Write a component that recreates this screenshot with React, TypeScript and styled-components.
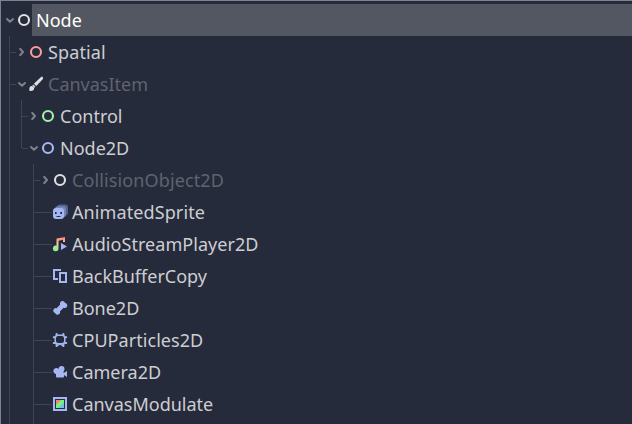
import React from "react";
import styled, { createGlobalStyle, css } from "styled-components";

const BG = "#262b3b";
const LINE = "#3f4453";
const BLUE = "#a5b7f3";

const GlobalStyle = createGlobalStyle`
  html, body { margin: 0; padding: 0; background: ${BG}; }
`;

type GuideKind = "blank" | "pipe" | "tee" | "elbow" | "dash";
type ArrowKind = "open" | "closed";

const Panel = styled.div`
  box-sizing: border-box;
  width: 632px;
  height: 424px;
  overflow: hidden;
  padding: 3px 0 0 3px;
  border-top: 1px solid #7c828e;
  border-left: 1px solid #7c828e;
  background: ${BG};
  font-family: "Noto Sans", sans-serif;
`;

const Row = styled.div`
  display: flex;
  align-items: center;
  height: 32px;
`;

const Guide = styled.span<{ $kind: GuideKind }>`
  flex: none;
  width: 12px;
  height: 32px;
  background-repeat: no-repeat;
  ${({ $kind }) => {
    const v = `linear-gradient(${LINE}, ${LINE})`;
    switch ($kind) {
      case "pipe":
        return css`background-image: ${v}; background-size: 1px 32px; background-position: 5px 0;`;
      case "tee":
        return css`background-image: ${v}, ${v}; background-size: 1px 32px, 7px 1px; background-position: 5px 0, 5px 16px;`;
      case "elbow":
        return css`background-image: ${v}, ${v}; background-size: 1px 16px, 6px 1px; background-position: 5px 0, 6px 16px;`;
      case "dash":
        return css`background-image: ${v}; background-size: 12px 1px; background-position: 0 16px;`;
      default:
        return "";
    }
  }}
`;

const ArrowSvg = styled.svg`
  flex: none;
  width: 12px;
  height: 12px;
`;

const IconSvg = styled.svg`
  flex: none;
  width: 16px;
  height: 16px;
`;

const Label = styled.span<{ $selected?: boolean; $dim?: boolean; $tracking?: number }>`
  flex: 1;
  height: 32px;
  padding-left: 4px;
  line-height: 32px;
  font-size: 18px;
  letter-spacing: ${({ $tracking }) => $tracking ?? 0}px;
  white-space: nowrap;
  color: ${({ $selected, $dim }) => ($selected ? "#ffffff" : $dim ? "#5f636f" : "#cdced2")};
  background: ${({ $selected }) => ($selected ? "#535762" : "transparent")};
`;

const Arrow = ({ kind }: { kind: ArrowKind }) => (
  <ArrowSvg viewBox="0 0 12 12" fill="none" stroke="#7f838d" strokeWidth="2">
    {kind === "open" ? (
      <path d="M3 5 L6 7.800 L9 5" strokeLinecap="round" strokeLinejoin="round" />
    ) : (
      <path d="M4.200 2.800 L7 6 L4.200 9.200" strokeLinecap="round" strokeLinejoin="round" />
    )}
  </ArrowSvg>
);

const Ring = ({ color }: { color: string }) => (
  <circle cx="8" cy="8" r="5" fill="none" stroke={color} strokeWidth="2.100" />
);

const Brush = () => (
  <g fill="#e0e0e0">
    <path d="M14.700 1.300c.6.6.5 1.300 0 1.900L8.300 10.100 5.900 7.700 12.800 1.300c.6-.6 1.400-.6 1.900 0z" />
    <path d="M5.200 8.500 7.500 10.800 6.500 11.700 4.300 9.500z" />
    <path d="M3.600 10c1.300 0 2.500 1.100 2.500 2.400 0 1.600-1.500 2.800-5.100 2.400.7-.5.3-1.200.4-2.500.1-1.300.9-2.300 2.200-2.300z" />
  </g>
);

const Sprites = () => (
  <g>
    <rect x="5" y="0.500" width="11" height="11" rx="3" fill="#526092" />
    <rect x="3" y="2.200" width="11" height="11" rx="3" fill="#7585b9" />
    <rect x="1" y="4" width="11" height="11" rx="3" fill={BLUE} />
    <path d="M3 8h1.600v2H3zM8.300 8h1.700v2H8.300zM4 12h5c-.4.7-1.300 1.100-2.500 1.100S4.400 12.700 4 12z" fill={BG} />
  </g>
);

const Audio = () => (
  <g>
    <linearGradient id="note" x1="0" y1="1" x2="0" y2="15" gradientUnits="userSpaceOnUse">
      <stop offset="0" stopColor="#ff7a7a" />
      <stop offset=".45" stopColor="#f6cf91" />
      <stop offset=".9" stopColor="#8fef97" />
    </linearGradient>
    <path d="M4.500 2.500 13 1v5h-2V3.800L6.500 4.700v7.800a2.800 2.800 0 1 1-2-2.700z" fill="url(#note)" />
    <path d="M9 7v7l6-3.500z" fill={BLUE} />
  </g>
);

const Copy = () => (
  <path
    fill={BLUE}
    fillRule="evenodd"
    d="M1 1h8v2H3v7h3v2H1zM7 4h8v11H7zM9 6v7h4V6z"
  />
);

const Bone = () => (
  <path
    fill={BLUE}
    d="M10.500 1a2.500 2.500 0 0 1 2.500 2 2.500 2.500 0 1 1-1.400 4.700L7.900 11.400A2.500 2.500 0 1 1 3.100 13 2.500 2.500 0 1 1 4.600 8.200L8.200 4.600A2.500 2.500 0 0 1 10.500 1z"
  />
);

const Particles = () => (
  <g fill="none" stroke={BLUE} strokeLinecap="round">
    <rect x="3.200" y="3.200" width="9.600" height="8.600" rx="3" strokeWidth="1.500" />
    <path
      d="M4.600 2v1.300M11.400 2v1.300M1.800 5.300h1.200M13 5.300h1.200M1.800 11h1.200M13 11h1.200M4.600 12.500v1.500M11.400 12.500v1.500"
      strokeWidth="2.100"
    />
    <path d="M5.500 13.500 8 11.800l2.500 1.700" strokeWidth="1.400" />
  </g>
);

const Camera = () => (
  <path
    fill={BLUE}
    d="M9.500 2a3 3 0 0 1 3 3c0 1-.4 1.700-.9 2.200V9L15 7v6l-3-2v1.500a1 1 0 0 1-1 1H5a1 1 0 0 1-1-1V10a3 3 0 1 1 2.700-4.900A3 3 0 0 1 9.500 2z"
  />
);

const Modulate = () => (
  <g>
    <path d="M1 1h14v14H1z" fill={BLUE} />
    <path d="M3 3h10v10H3z" fill={BG} />
    <path d="M4 4h8v8H4z" fill="#70f66f" />
    <path d="M4 4h5L4 9z" fill="#ff7a7a" />
    <path d="M12 6.500V12H6.500z" fill="#6fbdf6" />
  </g>
);

interface TreeItem {
  label: string;
  icon: React.ReactNode;
  guides: GuideKind[];
  arrow?: ArrowKind;
  dim?: boolean;
  selected?: boolean;
  tracking?: number;
}

const branch: GuideKind[] = ["pipe", "blank", "tee"];
const leaf: GuideKind[] = [...branch, "dash"];

const items: TreeItem[] = [
  { label: "Node", icon: <Ring color="#e0e0e0" />, guides: [], arrow: "open", selected: true },
  { label: "Spatial", icon: <Ring color="#fc9c9c" />, guides: ["tee"], arrow: "closed", tracking: 0.12 },
  { label: "CanvasItem", icon: <Brush />, guides: ["tee"], arrow: "open", dim: true },
  { label: "Control", icon: <Ring color="#a5efac" />, guides: ["pipe", "tee"], arrow: "closed" },
  { label: "Node2D", icon: <Ring color={BLUE} />, guides: ["pipe", "elbow"], arrow: "open" },
  { label: "CollisionObject2D", icon: <Ring color="#e0e0e0" />, guides: branch, arrow: "closed", dim: true, tracking: 0.12 },
  { label: "AnimatedSprite", icon: <Sprites />, guides: leaf, tracking: 0.1 },
  { label: "AudioStreamPlayer2D", icon: <Audio />, guides: leaf, tracking: 0.05 },
  { label: "BackBufferCopy", icon: <Copy />, guides: leaf },
  { label: "Bone2D", icon: <Bone />, guides: leaf },
  { label: "CPUParticles2D", icon: <Particles />, guides: leaf, tracking: 0.06 },
  { label: "Camera2D", icon: <Camera />, guides: leaf },
  { label: "CanvasModulate", icon: <Modulate />, guides: leaf },
];

export default function App() {
  return (
    <>
      <GlobalStyle />
      <Panel>
        {items.map((item) => (
          <Row key={item.label}>
            {item.guides.map((kind, i) => (
              <Guide key={i} $kind={kind} />
            ))}
            {item.arrow && <Arrow kind={item.arrow} />}
            <IconSvg viewBox="0 0 16 16">{item.icon}</IconSvg>
            <Label $selected={item.selected} $dim={item.dim} $tracking={item.tracking}>
              {item.label}
            </Label>
          </Row>
        ))}
        <Row>
          <Guide $kind="pipe" />
          <Guide $kind="blank" />
          <Guide $kind="pipe" />
        </Row>
      </Panel>
    </>
  );
}
